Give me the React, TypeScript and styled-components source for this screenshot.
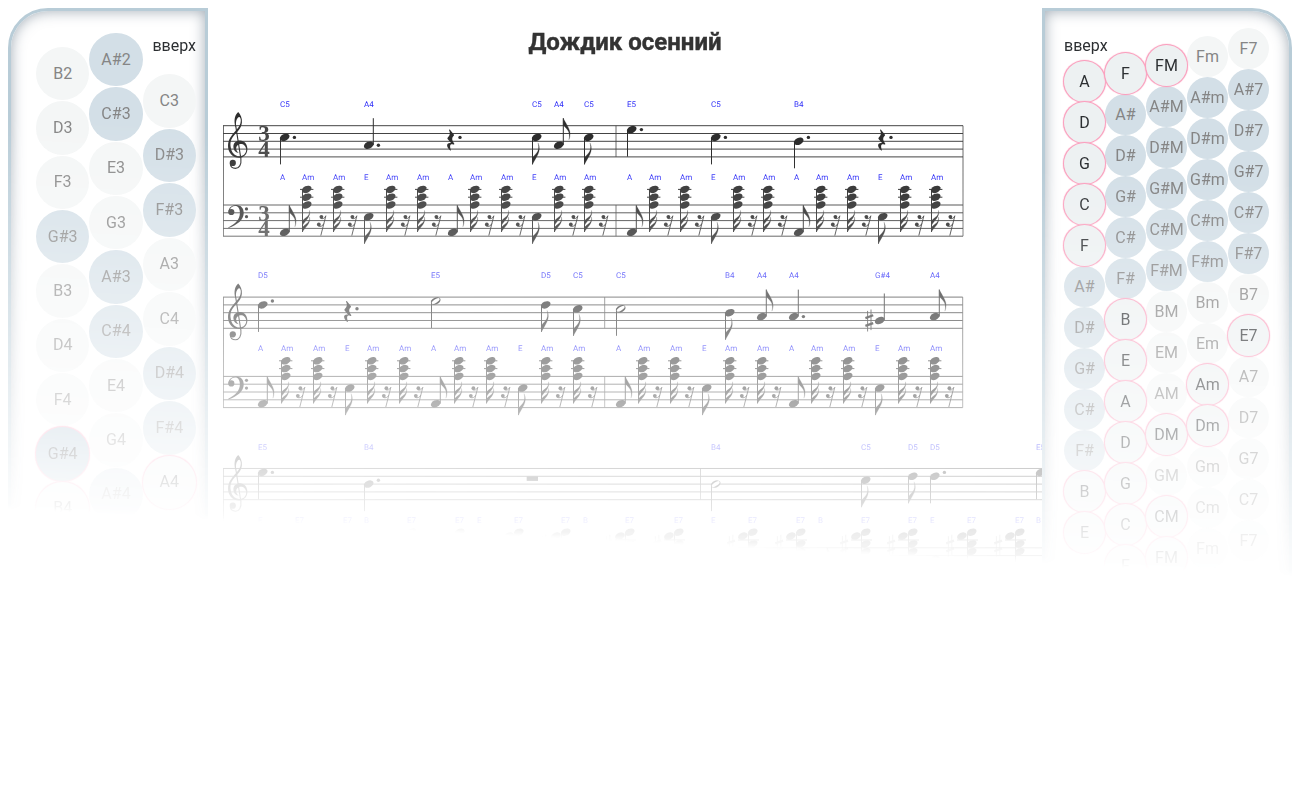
import React from 'react';
import styled, { createGlobalStyle } from 'styled-components';

const GlobalStyle = createGlobalStyle`
  * { box-sizing: border-box; }
  body {
    margin: 8px;
    background: #fff;
    color: #2c2f32;
    font: 16px/24px Roboto, sans-serif;
    overflow: hidden;
  }
`;

const Page = styled.div`
  display: grid;
  grid-template-columns: 200px minmax(0, 1fr) 250px;
  height: calc(100vh - 16px);
  mask-image: linear-gradient(183deg, #000 175px, rgba(0, 0, 0, 0.05) 562px, transparent 568px);
`;

const Panel = styled.aside<{ $side: 'left' | 'right' }>`
  display: flex;
  align-items: flex-start;
  padding: 0 0 0 ${p => (p.$side === 'left' ? 25 : 19)}px;
  overflow: hidden;
  border: 3px solid #b8ccd7;
  border-radius: ${p => (p.$side === 'left' ? '40px 0 0 40px' : '0 40px 40px 0')};
  box-shadow: inset 0 0 14px rgba(70, 90, 110, 0.5);
`;

const Keyboard = styled.div<{ $width: number; $columns: number }>`
  display: grid;
  grid-template-columns: repeat(${p => p.$columns}, minmax(0, 1fr));
  align-items: start;
  width: ${p => p.$width}px;
`;

const KeyColumn = styled.div<{ $top: number }>`
  display: flex;
  flex-direction: column;
  padding-top: ${p => p.$top}px;
`;

const Direction = styled.span<{ $space: number; $end?: boolean }>`
  display: flex;
  justify-content: ${p => (p.$end ? 'flex-end' : 'flex-start')};
  white-space: nowrap;
  margin-bottom: ${p => p.$space}px;
`;

const Keys = styled.div<{ $height: number; $gap: number }>`
  display: grid;
  grid-auto-rows: 1fr;
  gap: ${p => p.$gap}px;
  height: ${p => p.$height}px;
`;

const Key = styled.button<{ $sharp: boolean; $active: boolean }>`
  display: flex;
  align-items: center;
  justify-content: center;
  padding: 0;
  border: 0;
  border-radius: 50%;
  white-space: nowrap;
  font: inherit;
  color: ${p => (p.$active ? '#2c2f32' : '#858585')};
  background: ${p => (p.$sharp ? (p.$active ? '#a8c0d0' : '#d3dfe7') : p.$active ? '#edf1f2' : '#f4f6f6')};
  box-shadow: ${p => (p.$active ? '0 0 1px 1px #fa9dbc, 0 0 1px 1px #fbb8cd' : 'none')};
  position: relative;
  z-index: ${p => (p.$active ? 1 : 0)};
`;

const Sheet = styled.main`
  min-width: 0;
  overflow: hidden;
  padding-left: 15px;
`;

const Title = styled.h1`
  margin: 19px 0 38px;
  padding-right: 15px;
  text-align: center;
  font-size: 24px;
  line-height: 30px;
  font-weight: 700;
  color: #333;
  -webkit-text-stroke: 0.4px #333;
`;

const Score = styled.svg`
  display: block;
  width: 100%;
  height: 520px;
`;

type ColumnData = { top: number; keys: string[]; label?: boolean };

// An asterisk marks a key that sounds in the song.
const melody: ColumnData[] = [
  { top: 36, keys: ['B2', 'D3', 'F3', 'G#3', 'B3', 'D4', 'F4', 'G#4*', 'B4*'] },
  { top: 22, keys: ['A#2', 'C#3', 'E3', 'G3', 'A#3', 'C#4', 'E4', 'G4', 'A#4'] },
  { top: 23, label: true, keys: ['C3', 'D#3', 'F#3', 'A3', 'C4', 'D#4', 'F#4', 'A4*'] },
];

const chords: ColumnData[] = [
  { top: 23, label: true, keys: ['A*', 'D*', 'G*', 'C*', 'F*', 'A#', 'D#', 'G#', 'C#', 'F#', 'B*', 'E*'] },
  { top: 42, keys: ['F*', 'A#', 'D#', 'G#', 'C#', 'F#', 'B*', 'E*', 'A*', 'D*', 'G*', 'C*', 'F*'] },
  { top: 34, keys: ['FM*', 'A#M', 'D#M', 'G#M', 'C#M', 'F#M', 'BM', 'EM', 'AM', 'DM*', 'GM', 'CM*', 'FM*'] },
  { top: 25, keys: ['Fm', 'A#m', 'D#m', 'G#m', 'C#m', 'F#m', 'Bm', 'Em', 'Am*', 'Dm*', 'Gm', 'Cm', 'Fm'] },
  { top: 17, keys: ['F7', 'A#7', 'D#7', 'G#7', 'C#7', 'F#7', 'B7', 'E7*', 'A7', 'D7', 'G7', 'C7', 'F7'] },
];

function Column({ data, height, gap, space, end }: { data: ColumnData; height: number; gap: number; space: number; end?: boolean }) {
  return (
    <KeyColumn $top={data.top}>
      {data.label && <Direction $space={space} $end={end}>вверх</Direction>}
      <Keys $height={height} $gap={gap}>
        {data.keys.map((k, i) => (
          <Key key={i} type="button" $sharp={k.includes('#')} $active={k.endsWith('*')}>
            {k.replace('*', '')}
          </Key>
        ))}
      </Keys>
    </KeyColumn>
  );
}

const INK = '#2d2d2d';
const SP = 7.8;
const TREBLE = 30.7;
const BASS = 110;
const SYSTEM = 171.4;

// Steps below the top line of the staff, one per line or space.
const STEPS: Record<string, number> = { E5: 1, D5: 2, C5: 3, B4: 4, A4: 5, 'G#4': 6 };

function Head({ x, y, hollow }: { x: number; y: number; hollow?: boolean }) {
  return (
    <g transform={`translate(${x + 4.7} ${y}) rotate(-25)`}>
      <ellipse rx="5.1" ry="3.4" />
      {hollow && <ellipse rx="4.5" ry="1.8" transform="rotate(-8)" fill="#fff" />}
    </g>
  );
}

const Label = ({ x, y, text }: { x: number; y: number; text: string }) => (
  <text x={x} y={y} fontSize="8" fill="#2f2ff8" fontFamily="Roboto, sans-serif" textRendering="geometricPrecision">{text}</text>
);

const FLAG = 'M0 0V-6.5C1 -9.5 8.2 -12 5.6 -21.5C9.6 -13 3.2 -7 0 0Z';

function Flag({ x, y, up }: { x: number; y: number; up?: boolean }) {
  return <path d={FLAG} transform={`translate(${x} ${y})${up ? ' scale(1 -1)' : ''}`} stroke={INK} strokeWidth="0.2" />;
}

function Stem({ x, y, up, flag }: { x: number; y: number; up?: boolean; flag?: boolean }) {
  const sx = up ? x + 9.3 : x + 0.5;
  const end = up ? y - 27 : y + 27;
  return (
    <>
      <path d={`M${sx} ${y}V${end}`} stroke={INK} strokeWidth="1" />
      {flag && <Flag x={sx} y={end} up={up} />}
    </>
  );
}

const Sharp = ({ x, y }: { x: number; y: number }) => (
  <g transform={`translate(${x} ${y})`} stroke={INK} fill="none">
    <path d="M2.4 -9.6V11M5.8 -11V9.6" strokeWidth="0.9" />
    <path d="M0.2 -2.4L8 -5.2M0.2 5.4L8 2.6" strokeWidth="2.2" />
  </g>
);

type Note = { x: number; n: string; kind: 'dot' | 'q' | 'e' | 'h' | 'rest' | 'whole' };

function TrebleNote({ x, n, kind }: Note) {
  if (kind === 'rest') {
    return (
      <g transform={`translate(${x} ${TREBLE + 3.8})`}>
        <path d="M2 .5C2 0 2.6 -.2 3 .3L6.8 5C7.2 5.6 7 6 6.5 6.6C4.6 8.8 4.8 10.6 7.2 14C7.6 14.8 7 15.3 6.2 15C3.6 14 2.2 15.6 3.8 20.2C4.2 21 3.6 21.4 3 20.8C-1 17 -1 12.8 4 13.6L.6 9.6C.2 9 .3 8.6 .8 8C3.2 5.4 3.4 3.6 2 .5Z" />
        <circle cx="13" cy="7.9" r="1.7" />
      </g>
    );
  }
  if (kind === 'whole') return <rect x={x} y={TREBLE + SP} width="11.3" height="4.6" />;
  const step = STEPS[n];
  const y = TREBLE + (step * SP) / 2;
  const up = step > 4;
  return (
    <>
      <Label x={x} y={12} text={n} />
      {n.includes('#') && <Sharp x={x - 9.8} y={y} />}
      <Stem x={x} y={y} up={up} flag={kind === 'e'} />
      <Head x={x} y={y} hollow={kind === 'h'} />
      {kind === 'dot' && <circle cx={x + 14.4} cy={step % 2 ? y : y - SP / 2} r="1.7" />}
    </>
  );
}

function MinorChord({ x }: { x: number }) {
  const end = BASS + 27;
  return (
    <g>
      <Label x={x} y={85} text="Am" />
      {[2, 1, 0].map(k => (
        <g key={k}>
          {k > 0 && <path d={`M${x - 2} ${BASS - k * SP}h13.4`} stroke={INK} strokeWidth="1" />}
          <Head x={x} y={BASS - k * SP} />
        </g>
      ))}
      <path d={`M${x + 0.5} ${BASS - 2 * SP}V${end}`} stroke={INK} strokeWidth="1" />
      {[0, -6.6].map(d => (
        <path key={d} transform={`translate(${x + 0.5} ${end + d})`} d="M0 0V-4.5C1.5 -7.5 7.6 -8.5 7 -15C8.6 -8.5 3 -5.5 0 0Z" stroke={INK} strokeWidth="0.2" />
      ))}
      <g transform={`translate(${x + 14.6} ${BASS + 10})`}>
        <circle cx="4.8" cy="1.8" r="1.9" />
        <circle cx="2.2" cy="9.4" r="1.9" />
        <path d="M9.3 .6L4.2 20.6M4 3.4C6 4.2 8 3.4 9 1.2M1.6 11C4 12 6.2 11 7.2 8.6" fill="none" stroke={INK} strokeWidth="0.9" />
      </g>
    </g>
  );
}

function SeventhChord({ x }: { x: number }) {
  return (
    <g>
      <Label x={x} y={85} text="E7" />
      <g opacity="0.6"><Sharp x={x - 21} y={BASS - 2} /></g>
      <path d={`M${x + 0.5} ${BASS - 15}V${BASS + 30}M${x - 10} ${BASS - SP}h21`} stroke={INK} strokeWidth="1" />
      <Head x={x} y={BASS - 15.6} />
      <Head x={x - 9.8} y={BASS - 11.7} />
      <Head x={x} y={BASS - 3.9} />
      <Head x={x} y={BASS + 3.9} />
    </g>
  );
}

function BassNote({ x, n }: { x: number; n: string }) {
  const low = n !== 'E';
  const y = BASS + (low ? 27.3 : 11.7);
  return (
    <>
      <Label x={x} y={85} text={n} />
      <Stem x={x} y={y} up={low} flag />
      <Head x={x} y={y} />
    </>
  );
}

type SystemData = { notes: Note[]; bass: [number, string][]; bar: number; end: number; time?: boolean };

const n = (x: number, name: string, kind: Note['kind']): Note => ({ x, n: name, kind });

const systems: SystemData[] = [
  {
    time: true, bar: 393, end: 740,
    notes: [
      n(57, 'C5', 'dot'), n(141, 'A4', 'dot'), n(224, '', 'rest'), n(309, 'C5', 'e'), n(331, 'A4', 'e'), n(361, 'C5', 'e'),
      n(404, 'E5', 'dot'), n(488, 'C5', 'dot'), n(571, 'B4', 'dot'), n(655, '', 'rest'),
    ],
    bass: [
      [57, 'A'], [79, 'Am'], [110, 'Am'], [141, 'E'], [163, 'Am'], [194, 'Am'], [225, 'A'], [247, 'Am'], [278, 'Am'], [309, 'E'], [331, 'Am'], [361, 'Am'],
      [404, 'A'], [426, 'Am'], [457, 'Am'], [488, 'E'], [510, 'Am'], [540, 'Am'], [571, 'A'], [593, 'Am'], [624, 'Am'], [655, 'E'], [677, 'Am'], [708, 'Am'],
    ],
  },
  {
    bar: 381.7, end: 739.7,
    notes: [
      n(35, 'D5', 'dot'), n(121, '', 'rest'), n(208, 'E5', 'h'), n(318, 'D5', 'e'), n(350, 'C5', 'e'),
      n(393, 'C5', 'h'), n(502, 'B4', 'e'), n(534, 'A4', 'e'), n(566, 'A4', 'dot'), n(652, 'G#4', 'q'), n(707, 'A4', 'e'),
    ],
    bass: [
      [35, 'A'], [58, 'Am'], [90, 'Am'], [122, 'E'], [144, 'Am'], [176, 'Am'], [208, 'A'], [231, 'Am'], [263, 'Am'], [295, 'E'], [318, 'Am'], [350, 'Am'],
      [393, 'A'], [415, 'Am'], [447, 'Am'], [479, 'E'], [502, 'Am'], [534, 'Am'], [566, 'A'], [588, 'Am'], [620, 'Am'], [652, 'E'], [675, 'Am'], [707, 'Am'],
    ],
  },
  {
    bar: 477.5, end: 940,
    notes: [
      n(35, 'E5', 'dot'), n(141, 'B4', 'dot'), n(303.7, '', 'whole'), n(488, 'B4', 'h'), n(638, 'C5', 'e'), n(685, 'D5', 'e'),
      n(707, 'D5', 'dot'), n(813, 'E5', 'q'),
    ],
    bass: [
      [35, 'E'], [72, 'E7'], [120, 'E7'], [141, 'B'], [184, 'E7'], [232, 'E7'], [254, 'E'], [291, 'E7'], [338, 'E7'], [360, 'B'], [402, 'E7'], [451, 'E7'],
      [488, 'E'], [525, 'E7'], [573, 'E7'], [595, 'B'], [638, 'E7'], [685, 'E7'], [707, 'E'], [744, 'E7'], [792, 'E7'], [813, 'B'],
    ],
  },
];

const TREBLE_CLEF =
  'M7.3 15C5.6 8 7 3 10.2 .2C12.5 2.5 14.3 6.5 13.9 10.5C13.3 16.5 9.5 19.5 6 23.5C2.5 27.5 2.2 31 2.6 34.5C3.2 40.5 7 44.5 11.8 44.3C16 44 18.3 41 18.2 37.5C18 34 15.5 32 13 32C9.8 32 8 34.5 8.2 36.8C8.4 39 9.8 40.5 11.3 41C8 40.8 5.6 38.5 5.4 35C5.2 31 8.2 28.6 12 28.6C16.5 28.6 19.4 32.5 19.4 37C19.4 42 16 45.8 11 45.8C5 45.8 0 41 0 34C0 27.5 3.5 23.5 7 19.5C10 16 12.8 13 12.8 8.5C12.8 6.5 12 5 11.2 5C9 5.5 7.3 9.5 8.3 14.5Z';
const BASS_CLEF =
  'M1 7C.5 3 4 0 8.5 0C13.5 0 16.2 3.5 16 8.5C15.7 15 10 19.5 .8 23L.5 22.4C8 18.5 12 14.5 12.2 8.2C12.3 3.8 10.5 1.1 7.5 1.1C4.5 1.1 2.5 3 2.2 5Z';

function TimeSignature({ y }: { y: number }) {
  return (
    <g fontFamily="Liberation Serif, serif" fontWeight="700" fontSize="23" textAnchor="middle" fill="#444">
      <text x="41" y={y + 15.6}>3</text>
      <text x="41" y={y + 31.2}>4</text>
    </g>
  );
}

function System({ data, index }: { data: SystemData; index: number }) {
  return (
    <g transform={`translate(0 ${index * SYSTEM})`} fill={INK}>
      <g stroke="#444" strokeWidth="1" fill="none">
        {[TREBLE, BASS].map(top => (
          <g key={top}>
            {[0, 1, 2, 3, 4].map(i => <path key={i} d={`M0 ${top + i * SP}H${data.end}`} />)}
            <path d={`M${data.bar} ${top}v${4 * SP}`} strokeWidth="0.8" />
          </g>
        ))}
        <path d={`M0.5 ${TREBLE}V${BASS + 4 * SP}M${data.end} ${TREBLE}V${BASS + 4 * SP}`} strokeWidth="0.8" />
      </g>
      <g transform={`translate(5 ${TREBLE - 13.8})`}>
        <path d={TREBLE_CLEF} />
        <path d="M7.8 14.5L12.9 47C13.6 53 11 56.5 7.5 56.5C4.4 56.5 2.4 54.4 2.3 51.6" fill="none" stroke={INK} strokeWidth="1.1" />
        <circle cx="4.8" cy="51" r="3.1" />
      </g>
      <g transform={`translate(4.7 ${BASS})`}>
        <path d={BASS_CLEF} />
        <circle cx="3.6" cy="7" r="3.1" />
        <circle cx="18.8" cy="3.9" r="1.6" />
        <circle cx="18.8" cy="11.7" r="1.6" />
      </g>
      {data.time && <TimeSignature y={TREBLE} />}
      {data.time && <TimeSignature y={BASS} />}
      {data.notes.map((note, i) => <TrebleNote key={i} {...note} />)}
      {data.bass.map(([x, name], i) =>
        name === 'Am' ? <MinorChord key={i} x={x} /> : name === 'E7' ? <SeventhChord key={i} x={x} /> : <BassNote key={i} x={x} n={name} />
      )}
    </g>
  );
}

export default function App() {
  return (
    <>
      <GlobalStyle />
      <Page>
        <Panel $side="left">
          <Keyboard $width={160} $columns={3}>
            {melody.map((c, i) => <Column key={i} data={c} height={c.label ? 435 : 488} gap={1} space={16} end />)}
          </Keyboard>
        </Panel>
        <Sheet>
          <Title>Дождик осенний</Title>
          <Score aria-label="Ноты">
            {systems.map((s, i) => <System key={i} data={s} index={i} />)}
          </Score>
        </Sheet>
        <Panel $side="right">
          <Keyboard $width={205} $columns={5}>
            {chords.map((c, i) => <Column key={i} data={c} height={c.keys.length * 41} gap={0} space={3} />)}
          </Keyboard>
        </Panel>
      </Page>
    </>
  );
}
